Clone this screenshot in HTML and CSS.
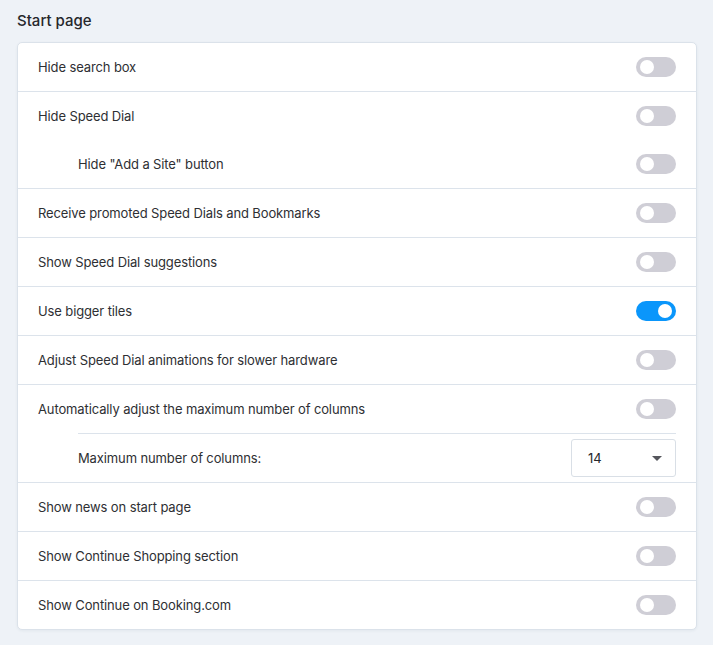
FILE: index.html
```html
<!DOCTYPE html>
<html>
<head>
<meta charset="utf-8">
<link rel="stylesheet" href="styles.css">
</head>
<body>
<div class="page">
  <h2 class="title">Start page</h2>
  <div class="card">
    <div class="row"><span class="label">Hide search box</span><span class="toggle"></span></div>
    <div class="group">
      <div class="row sub-first"><span class="label">Hide Speed Dial</span><span class="toggle"></span></div>
      <div class="row indent nosep"><span class="label">Hide "Add a Site" button</span><span class="toggle"></span></div>
    </div>
    <div class="row"><span class="label">Receive promoted Speed Dials and Bookmarks</span><span class="toggle"></span></div>
    <div class="row"><span class="label">Show Speed Dial suggestions</span><span class="toggle"></span></div>
    <div class="row"><span class="label">Use bigger tiles</span><span class="toggle on"></span></div>
    <div class="row"><span class="label">Adjust Speed Dial animations for slower hardware</span><span class="toggle"></span></div>
    <div class="group">
      <div class="row sub-first"><span class="label">Automatically adjust the maximum number of columns</span><span class="toggle"></span></div>
      <div class="row indent insep"><span class="label">Maximum number of columns:</span>
        <div class="select"><span>14</span><span class="caret"></span></div>
      </div>
    </div>
    <div class="row"><span class="label">Show news on start page</span><span class="toggle"></span></div>
    <div class="row"><span class="label">Show Continue Shopping section</span><span class="toggle"></span></div>
    <div class="row"><span class="label">Show Continue on Booking.com</span><span class="toggle"></span></div>
  </div>
</div>
</body>
</html>
```
FILE: styles.css
```css
html, body {
  margin: 0;
  padding: 0;
  background: #eef2f7;
}
body {
  font-family: Inter, "Noto Sans", sans-serif;
  color: #2e2f33;
}
.page {
  padding: 10px 16px 16px 17px;
}
.title {
  margin: 0 0 11px 0;
  font-size: 15px;
  font-weight: 500;
  line-height: 21px;
  color: #26272b;
}
.card {
  background: #fff;
  border: 1px solid #dbe2ea;
  border-radius: 5px;
  box-shadow: 0 1px 3px rgba(40, 60, 90, 0.06);
}
.group {
  border-top: 1px solid #dce3eb;
}
.card > .group:first-child,
.card > .row:first-child {
  border-top: none;
}
.row {
  display: flex;
  align-items: center;
  justify-content: space-between;
  height: 48px;
  padding: 0 20px 0 20px;
  border-top: 1px solid #dce3eb;
  font-size: 13px;
  letter-spacing: -0.12px;
}
.group .row { border-top: none; }
.group .row.indent {
  margin-left: 60px;
  padding-left: 0;
  margin-right: 20px;
  padding-right: 0;
}
.group .row.insep {
  border-top: 1px solid #dce3eb;
}
.toggle {
  position: relative;
  width: 40px;
  height: 20px;
  border-radius: 10px;
  background: #cfced6;
  flex: none;
}
.toggle::after {
  content: "";
  position: absolute;
  top: 3px;
  left: 4px;
  width: 14px;
  height: 14px;
  border-radius: 50%;
  background: #fff;
}
.toggle.on {
  background: #0a96fb;
}
.toggle.on::after {
  left: auto;
  right: 4px;
}
.select {
  box-sizing: border-box;
  width: 105px;
  height: 38px;
  border: 1px solid #d9dfe6;
  border-radius: 3px;
  display: flex;
  align-items: center;
  justify-content: space-between;
  padding: 0 13px 0 16px;
  font-size: 13px;
  color: #26272b;
}
.caret {
  width: 0;
  height: 0;
  border-left: 5px solid transparent;
  border-right: 5px solid transparent;
  border-top: 5px solid #55565c;
}
```
